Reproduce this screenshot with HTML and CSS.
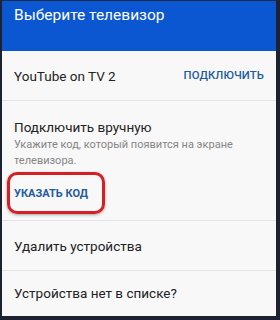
FILE: index.html
```html
<!DOCTYPE html>
<html lang="ru">
<head>
<meta charset="utf-8">
<link rel="stylesheet" href="styles.css">
</head>
<body>
<div class="frame">
  <header class="bar">Выберите телевизор</header>
  <div class="row">
    <span class="name">YouTube on TV 2</span>
    <span class="link">ПОДКЛЮЧИТЬ</span>
  </div>
  <div class="manual">
    <div class="name">Подключить вручную</div>
    <div class="hint">Укажите код, который появится на экране телевизора.</div>
    <div class="code-wrap"><span class="code">УКАЗАТЬ КОД</span></div>
  </div>
  <div class="row"><span class="name">Удалить устройства</span></div>
  <div class="row last"><span class="name">Устройства нет в списке?</span></div>
</div>
</body>
</html>
```
FILE: styles.css
```css
html, body { margin: 0; padding: 0; }
body { width: 280px; height: 320px; background: #1c2230; font-family: Roboto, "Noto Sans", sans-serif; overflow: hidden; }
.frame {
  box-sizing: border-box;
  width: 280px; height: 320px;
  border-top: 1px solid #1c2a48;
  border-left: 2px solid #1c2230;
  border-right: 4px solid #1c2230;
  border-bottom: 4px solid #1c2230;
  background: #f8f8f8;
  display: flex; flex-direction: column;
}
.bar {
  background: #0b57d2;
  color: #fff;
  height: 50px;
  flex: none;
  box-sizing: border-box;
  padding: 3px 0 0 12px;
  font-size: 15.5px;
  line-height: 22px;
}
.row {
  height: 50px;
  flex: none;
  border-bottom: 1px solid #e4e4e4;
  display: flex; align-items: center; justify-content: space-between;
  padding: 0 12px 0 12px;
  box-sizing: border-box;
}
.row.last { border-bottom: none; flex: 1; padding-bottom: 2px; }
.name { color: #222; font-size: 13.5px; }
.link { color: #1d5c9e; font-size: 11.3px; font-weight: 500; letter-spacing: 0.1px; }
.manual {
  flex: none;
  border-bottom: 1px solid #e4e4e4;
  padding: 16px 12px 0 12px;
  height: 120px;
  box-sizing: border-box;
}
.manual .name { line-height: 20px; }
.hint { color: #858585; font-size: 11px; line-height: 16px; width: 250px; }
.code-wrap {
  margin: 3px 0 0 -7px;
  width: 98px; height: 42px;
  border: 3px solid #d41f24;
  border-radius: 10px;
  box-sizing: border-box;
  display: flex; align-items: center; padding-left: 4px;
  box-shadow: 0 1px 3px rgba(0,0,0,0.35);
}
.code { color: #1d5c9e; font-size: 11px; font-weight: bold; white-space: nowrap; }
```
